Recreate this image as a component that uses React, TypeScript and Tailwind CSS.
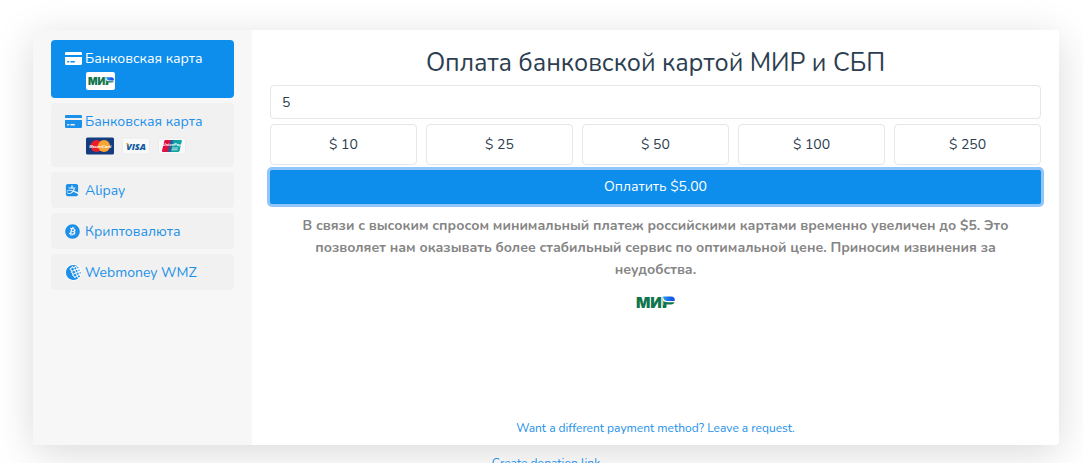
import { useState } from "react";
import type { FormEvent, ReactNode } from "react";
import clsx from "clsx";
import { FaAlipay, FaBitcoin } from "react-icons/fa";
import { SiWebmoney } from "react-icons/si";

type Method = {
  id: string;
  title: string;
  icon: ReactNode;
  logos?: ReactNode;
};

const AMOUNTS = [10, 25, 50, 100, 250];

function CardIcon() {
  return (
    <svg viewBox="0 0 17 13" className="h-[13px] w-[17px]" fill="currentColor" aria-hidden="true">
      <path d="M1.2 0h14.600A1.200 1.200 0 0 1 17 1.200V3H0V1.200A1.200 1.200 0 0 1 1.200 0z" />
      <path
        fillRule="evenodd"
        d="M0 5h17v6.800a1.200 1.200 0 0 1-1.200 1.200H1.200A1.200 1.200 0 0 1 0 11.800zM2.200 9v1.600h2V9zM5.400 9v1.600h4.400V9z"
      />
    </svg>
  );
}

function MirLogo({ className }: { className?: string }) {
  return (
    <svg viewBox="0 0 39 12" className={clsx("overflow-visible", className)} role="img" aria-label="МИР">
      <defs>
        <linearGradient id="mir" x1="27" x2="39" y1="0" y2="0" gradientUnits="userSpaceOnUse">
          <stop offset="0" stopColor="#1fa4f4" />
          <stop offset="0.7" stopColor="#1a55e6" />
        </linearGradient>
      </defs>
      <text x="0" y="11.500" fontSize="15" fontWeight="900" fontFamily="Inter" fill="#0f754e">
        МИР
      </text>
      <path d="M27 0H40v9H27z" fill="#fff" />
      <path d="M27 0.500h8c2.800 0 4.200 1.600 3.800 4.600h-7.500c-2.200 0-3.900-1.700-4.300-4.600z" fill="url(#mir)" />
      <path d="M27.300 4.500c.8 1.200 2 1.700 4 1.700h7.200c-.6 1.500-1.900 2.200-3.700 2.200h-4.300v3.100h-3.200z" fill="#0f754e" />
    </svg>
  );
}

function MastercardLogo() {
  return (
    <svg viewBox="0 0 28 17" className="h-[18px] w-7" role="img" aria-label="MasterCard">
      <rect width="28" height="17" rx="1.500" fill="#143c7e" />
      <circle cx="10.500" cy="8.500" r="6" fill="#ea1d2c" />
      <circle cx="18" cy="8.500" r="6" fill="#f9a533" />
      <text
        x="14.200"
        y="10.300"
        textAnchor="middle"
        fontSize="4"
        fontWeight="700"
        fontStyle="italic"
        fontFamily="Liberation Sans"
        fill="#fff"
      >
        MasterCard
      </text>
    </svg>
  );
}

function VisaLogo() {
  return (
    <svg viewBox="0 0 28 17" className="h-[18px] w-7" role="img" aria-label="VISA">
      <rect x="0.500" y="0.500" width="27" height="16" rx="1.500" fill="#f9f9f9" stroke="#ebebeb" />
      <text
        x="14"
        y="12"
        textAnchor="middle"
        fontSize="9"
        fontWeight="800"
        fontStyle="italic"
        fontFamily="Open Sans"
        fill="#0e5a9f"
      >
        VISA
      </text>
      <path d="M3.800 5.500h2.300l1 3z" fill="#e9a63a" />
    </svg>
  );
}

function UnionPayLogo() {
  return (
    <svg viewBox="0 0 28 17" className="h-[18px] w-7" role="img" aria-label="UnionPay">
      <rect x="0.500" y="0.500" width="27" height="16" rx="1.500" fill="#f9f9f9" stroke="#ebebeb" />
      <path d="M7.500 2.500h6l-2.700 12h-6c-.7 0-1-.5-.8-1.200l2.200-9.600c.2-.7.700-1.200 1.300-1.200z" fill="#dd1142" />
      <path d="M12.500 2.500h6l-2.700 12h-6z" fill="#27619b" />
      <path d="M15.500 2.500h7.500c.7 0 1 .5.800 1.200l-2.200 9.600c-.2.700-.7 1.200-1.300 1.200h-7.500z" fill="#0fa3a3" />
      <text
        x="14"
        y="8"
        textAnchor="middle"
        fontSize="4"
        fontWeight="700"
        fontStyle="italic"
        fontFamily="Liberation Sans"
        fill="#fff"
      >
        UnionPay
      </text>
      <path d="M14 10.500h6M13.500 12.300h6" stroke="#fff" strokeWidth="0.900" opacity="0.800" />
    </svg>
  );
}

const METHODS: Method[] = [
  {
    id: "mir",
    title: "Банковская карта",
    icon: <CardIcon />,
    logos: (
      <span className="my-0.5 flex h-[18px] w-[29px] items-center justify-center rounded-xs bg-white">
        <MirLogo className="h-2 w-[26px]" />
      </span>
    ),
  },
  {
    id: "card",
    title: "Банковская карта",
    icon: <CardIcon />,
    logos: (
      <span className="flex gap-2 pt-1 pb-1.5">
        <MastercardLogo />
        <VisaLogo />
        <UnionPayLogo />
      </span>
    ),
  },
  { id: "alipay", title: "Alipay", icon: <FaAlipay className="size-[14px]" /> },
  { id: "crypto", title: "Криптовалюта", icon: <FaBitcoin className="size-[15px]" /> },
  {
    id: "wmz",
    title: "Webmoney WMZ",
    icon: (
      <span className="flex size-[17px] items-center justify-center rounded-full bg-[#fafafa]">
        <SiWebmoney className="size-[15px]" />
      </span>
    ),
  },
];

type MethodButtonProps = {
  method: Method;
  active: boolean;
  onSelect: () => void;
};

function MethodButton({ method, active, onSelect }: MethodButtonProps) {
  return (
    <button
      type="button"
      aria-pressed={active}
      onClick={onSelect}
      className={clsx(
        "w-full rounded px-3.5 pt-2 pb-1.5 text-left",
        active ? "bg-[#0d8eec] text-white" : "bg-[#f1f1f1] text-[#1b90ea]",
      )}
    >
      <span className="flex h-[22px] items-center">
        <span className="flex w-5 shrink-0 pb-0.5">{method.icon}</span>
        {method.title}
      </span>
      {method.logos && <span className="flex pl-[21px]">{method.logos}</span>}
    </button>
  );
}

export default function App() {
  const [selected, setSelected] = useState("mir");
  const [amount, setAmount] = useState("5");

  const onSubmit = (e: FormEvent) => {
    e.preventDefault();
  };

  return (
    <div className="h-screen overflow-hidden bg-white pt-[30px] pr-6 pl-[33px] font-[Nunito,Lato,sans-serif] text-sm leading-5 text-[#2c3e50]">
      <main className="flex min-h-[415px] rounded shadow-[0_8px_40px_rgba(0,0,0,0.15)]">
        <nav
          aria-label="Payment methods"
          className="flex w-[219px] shrink-0 flex-col gap-[5px] rounded-l bg-[#f7f7f7] px-[18px] py-2.5"
        >
          {METHODS.map((method) => (
            <MethodButton
              key={method.id}
              method={method}
              active={method.id === selected}
              onSelect={() => setSelected(method.id)}
            />
          ))}
        </nav>

        <section className="flex flex-1 flex-col rounded-r bg-white px-[18px] pt-4 pb-2">
          <h1 className="mb-[5px] text-center text-[25px] leading-[34px]">Оплата банковской картой МИР и СБП</h1>
          <form onSubmit={onSubmit} className="flex flex-col gap-[5px]">
            <input
              aria-label="Сумма"
              inputMode="decimal"
              value={amount}
              onChange={(e) => setAmount(e.target.value)}
              className="h-[34px] w-full rounded border border-[#e6e6e6] px-[11px] outline-none"
            />
            <div className="grid grid-cols-5 gap-[9px]">
              {AMOUNTS.map((value) => (
                <button
                  key={value}
                  type="button"
                  onClick={() => setAmount(String(value))}
                  className="h-[41px] rounded border border-[#e6e6e6]"
                >
                  $ {value}
                </button>
              ))}
            </div>
            <button type="submit" className="h-[34px] rounded-xs bg-[#0d8eec] text-white ring-3 ring-[#92c6fb]">
              Оплатить ${Number(amount || 0).toFixed(2)}
            </button>
          </form>

          <p className="mt-[11px] px-3 text-center leading-[22px] font-bold text-[#858585]">
            В связи с высоким спросом минимальный платеж российскими картами временно увеличен до $5. Это позволяет
            нам оказывать более стабильный сервис по оптимальной цене. Приносим извинения за неудобства.
          </p>
          <MirLogo className="mx-auto mt-[15px] h-3 w-[39px]" />

          <a href="#request" className="mx-auto mt-auto text-xs leading-[18px] text-[#1b90ea]">
            Want a different payment method? Leave a request.
          </a>
        </section>
      </main>
      <div className="pt-2 text-center">
        <a href="#donation" className="text-xs leading-5 text-[#1b90ea]">
          Create donation link
        </a>
      </div>
    </div>
  );
}
